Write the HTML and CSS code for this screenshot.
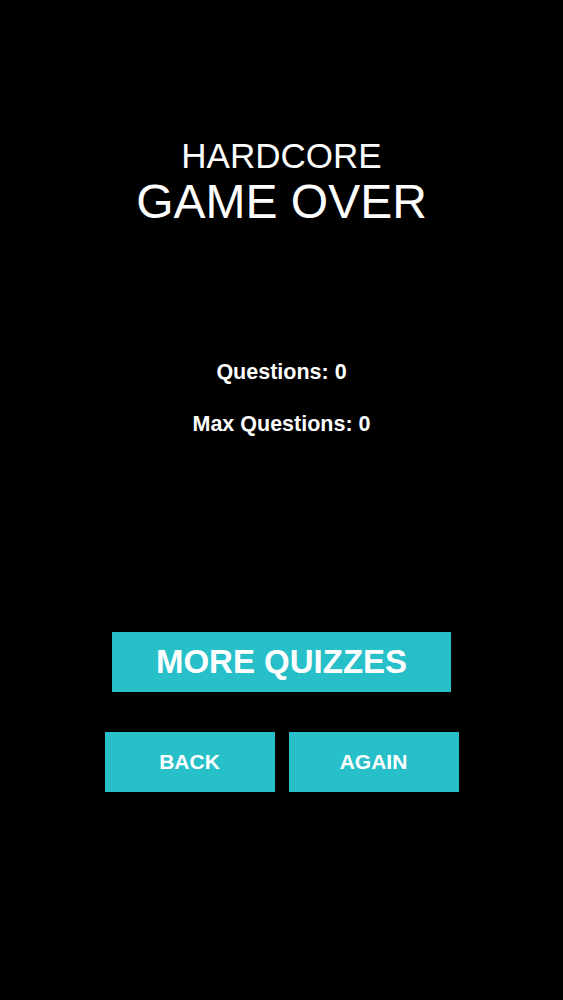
FILE: index.html
```html
<!DOCTYPE html>
<html lang="en">
<head>
  <meta charset="UTF-8" />
  <meta name="viewport" content="width=device-width, initial-scale=1.0" />
  <title>Game Over</title>
  <link rel="stylesheet" href="styles.css">
</head>
<body>

<div class="screen">
  <!-- Title -->
  <div class="title">
    <div class="mode">HARDCORE</div>
    <div class="headline">GAME OVER</div>
  </div>

  <!-- Score -->
  <div class="stats">
    <div class="stat">Questions: 0</div>
    <div class="stat">Max Questions: 0</div>
  </div>

  <!-- Actions -->
  <div class="actions">
    <button class="big-btn">MORE QUIZZES</button>
    <div class="btn-row">
      <button class="small-btn">BACK</button>
      <button class="small-btn">AGAIN</button>
    </div>
  </div>
</div>

</body>
</html>
```

FILE: styles.css
```css
* { margin: 0; padding: 0; box-sizing: border-box; }

body {
  font-family: "Liberation Sans", Arial, sans-serif;
  background: #000;
  color: #fff;
}

.screen {
  display: flex;
  flex-direction: column;
  align-items: center;
  padding-top: 138px;
  min-height: 1000px;
}

.title {
  display: flex;
  flex-direction: column;
  align-items: center;
  gap: 5px;
}

.mode {
  font-size: 35px;
  line-height: 1;
}

.headline {
  font-size: 48px;
  line-height: 1;
}

.stats {
  margin-top: 136px;
  display: flex;
  flex-direction: column;
  align-items: center;
  gap: 30px;
}

.stat {
  font-size: 21.5px;
  font-weight: bold;
  line-height: 1;
}

.actions {
  margin-top: 197px;
  display: flex;
  flex-direction: column;
  align-items: center;
  gap: 40px;
}

.big-btn, .small-btn {
  background-color: #27c0c9;
  color: #fff;
  border: none;
  font-family: inherit;
  font-weight: bold;
  cursor: pointer;
}

.big-btn {
  width: 339px;
  height: 60px;
  font-size: 33px;
}

.btn-row {
  display: flex;
  gap: 14px;
}

.small-btn {
  width: 170px;
  height: 60px;
  font-size: 21px;
}
```
